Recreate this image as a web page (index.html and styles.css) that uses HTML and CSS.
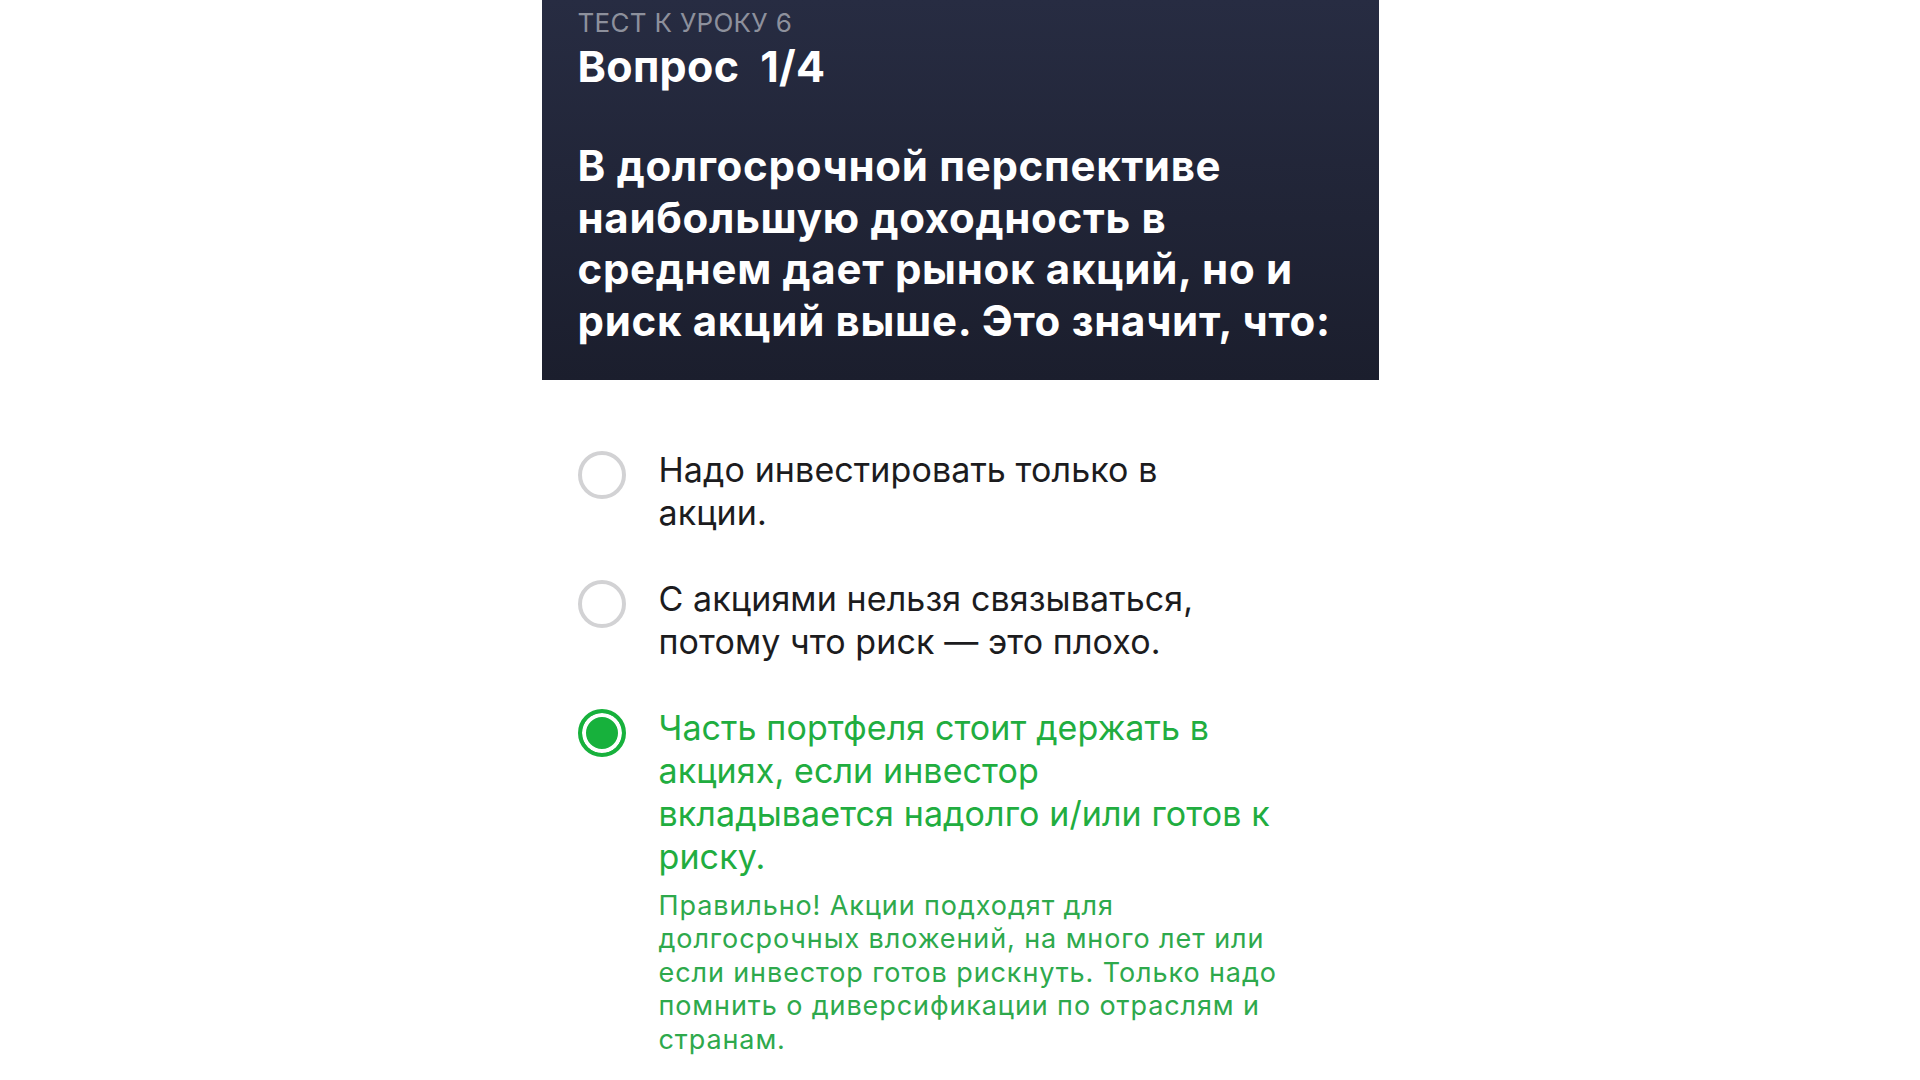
FILE: index.html
```html
<!DOCTYPE html>
<html lang="ru">
<head>
<meta charset="utf-8">
<title>Тест к уроку 6</title>
<link rel="stylesheet" href="styles.css">
</head>
<body>
<main class="quiz">
  <header class="quiz-head">
    <div class="quiz-meta">ТЕСТ К УРОКУ 6</div>
    <h1 class="quiz-title">Вопрос&nbsp; 1/4</h1>
    <p class="quiz-question">В долгосрочной перспективе<br>наибольшую доходность в<br>среднем дает рынок акций, но и<br>риск акций выше. Это значит, что:</p>
  </header>
  <ul class="options">
    <li class="option">
      <span class="radio"></span>
      <div class="option-body">
        <p class="option-text">Надо инвестировать только в<br>акции.</p>
      </div>
    </li>
    <li class="option">
      <span class="radio"></span>
      <div class="option-body">
        <p class="option-text">С акциями нельзя связываться,<br>потому что риск — это плохо.</p>
      </div>
    </li>
    <li class="option option-correct">
      <span class="radio radio-on"></span>
      <div class="option-body">
        <p class="option-text">Часть портфеля стоит держать в<br>акциях, если инвестор<br>вкладывается надолго и/или готов к<br>риску.</p>
        <p class="option-note">Правильно! Акции подходят для<br>долгосрочных вложений, на много лет или<br>если инвестор готов рискнуть. Только надо<br>помнить о диверсификации по отраслям и<br>странам.</p>
      </div>
    </li>
  </ul>
</main>
</body>
</html>
```
FILE: styles.css
```css
html, body {
  margin: 0;
  padding: 0;
  background: #ffffff;
}
body {
  font-family: Inter, "Noto Sans", "DejaVu Sans", sans-serif;
  color: #1c1c1e;
}
.quiz {
  width: 837px;
  margin: 0 auto;
}
.quiz-head {
  background: linear-gradient(180deg, #272c42 0%, #1b1e2d 100%);
  padding: 8px 36px 34px 36px;
  color: #ffffff;
}
.quiz-meta {
  font-size: 26px;
  line-height: 30px;
  color: #8d909c;
  letter-spacing: 0.3px;
}
.quiz-title {
  margin: 3px 0 0 0;
  font-size: 43px;
  line-height: 50px;
  font-weight: 700;
  letter-spacing: 0.3px;
}
.quiz-question {
  margin: 49px 0 0 0;
  font-size: 42px;
  line-height: 51.5px;
  font-weight: 700;
  letter-spacing: 0.7px;
  white-space: nowrap;
}
.options {
  list-style: none;
  margin: 68px 0 0 0;
  padding: 0 36px;
  display: flex;
  flex-direction: column;
  gap: 43px;
}
.option {
  display: flex;
  align-items: flex-start;
  gap: 33px;
}
.radio {
  flex: none;
  width: 48px;
  height: 48px;
  margin-top: 3px;
  box-sizing: border-box;
  border: 4px solid #d2d2d4;
  border-radius: 50%;
}
.radio-on {
  border-color: #17b13c;
  background: #17b13c;
  box-shadow: inset 0 0 0 4px #ffffff;
}
.option-body {
  display: flex;
  flex-direction: column;
  gap: 11px;
}
.option-text {
  margin: 0;
  font-size: 34px;
  line-height: 43px;
  letter-spacing: 0.1px;
  white-space: nowrap;
  color: #1c1c1e;
}
.option-correct .option-text {
  color: #21ad3f;
}
.option-note {
  margin: 0;
  font-size: 27px;
  line-height: 33.4px;
  letter-spacing: 0.9px;
  color: #2ea94c;
  white-space: nowrap;
}
```
